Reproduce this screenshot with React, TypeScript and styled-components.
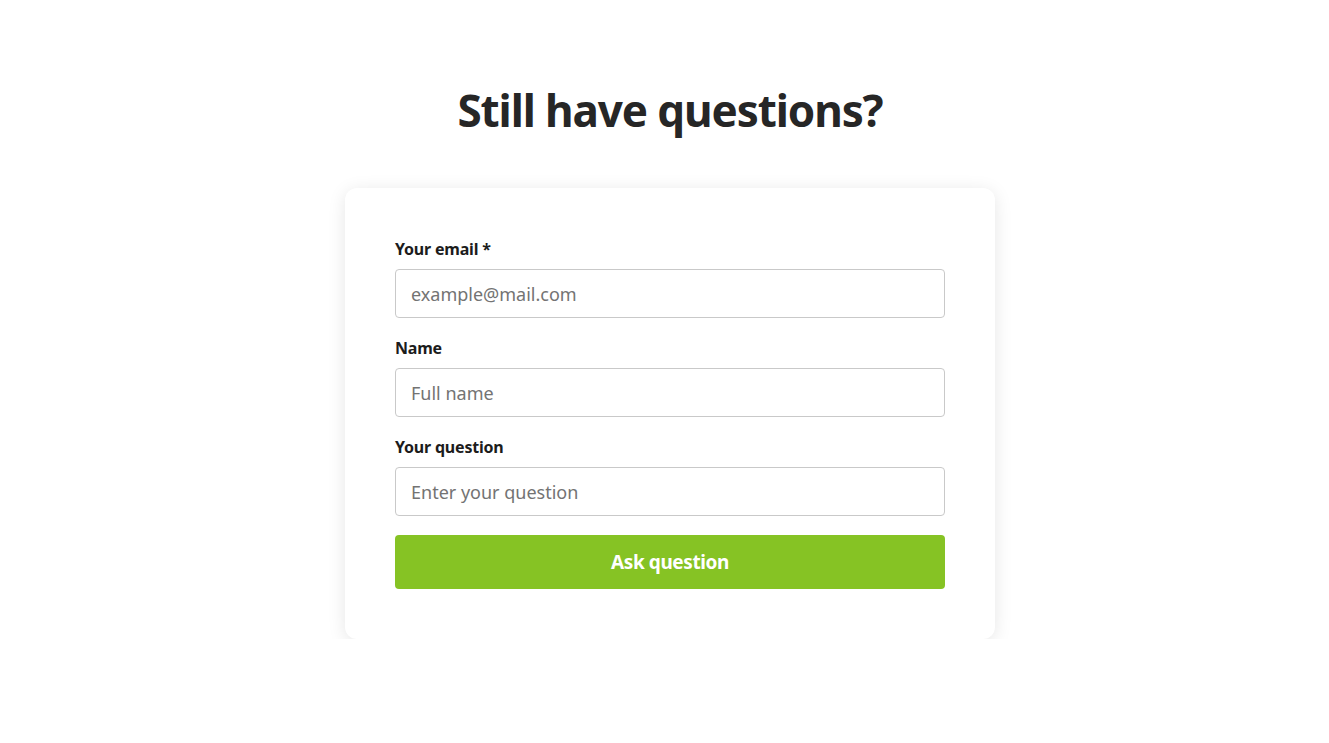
import React from 'react';
import styled, { createGlobalStyle } from 'styled-components';

const GlobalStyle = createGlobalStyle`
  * { box-sizing: border-box; }
  body {
    margin: 0;
    background: #ffffff;
    font-family: "Noto Sans", "Open Sans", Arial, sans-serif;
    color: #222222;
  }
`;

const Page = styled.main`
  display: flex;
  flex-direction: column;
  align-items: center;
  padding: 80px 0 0 11px;
`;

const Title = styled.h1`
  margin: 0 0 48px;
  font-size: 44px;
  line-height: 60px;
  font-weight: 700;
  letter-spacing: -1.1px;
  color: #262626;
`;

const Card = styled.form`
  width: 650px;
  padding: 50px;
  background: #ffffff;
  border-radius: 12px;
  box-shadow: 0 3px 18px rgba(0, 0, 0, 0.1);
  display: flex;
  flex-direction: column;
`;

const Field = styled.div`
  display: flex;
  flex-direction: column;
  margin-bottom: 19px;
`;

const Label = styled.label`
  font-size: 16px;
  line-height: 22px;
  font-weight: 700;
  color: #1c1c1c;
  margin-bottom: 9px;
  letter-spacing: -0.2px;
`;

const Input = styled.input`
  height: 49px;
  width: 100%;
  padding: 0 15px;
  border: 1px solid #c9c9c9;
  border-radius: 4px;
  font-family: inherit;
  font-size: 18px;
  color: #222222;
  outline: none;

  &::placeholder {
    color: #737373;
  }
`;

const Submit = styled.button`
  height: 54px;
  width: 100%;
  border: none;
  border-radius: 4px;
  background: #86c324;
  color: #ffffff;
  font-family: inherit;
  font-size: 19px;
  font-weight: 700;
  letter-spacing: -0.4px;
  cursor: pointer;
`;

const fields = [
  { id: 'email', label: 'Your email *', placeholder: 'example@mail.com', type: 'email' },
  { id: 'name', label: 'Name', placeholder: 'Full name', type: 'text' },
  { id: 'question', label: 'Your question', placeholder: 'Enter your question', type: 'text' },
];

const App: React.FC = () => {
  return (
    <Page>
      <GlobalStyle />
      <Title>Still have questions?</Title>
      <Card onSubmit={(e) => e.preventDefault()}>
        {fields.map((f) => (
          <Field key={f.id}>
            <Label htmlFor={f.id}>{f.label}</Label>
            <Input id={f.id} type={f.type} placeholder={f.placeholder} />
          </Field>
        ))}
        <Submit type="submit">Ask question</Submit>
      </Card>
    </Page>
  );
};

export default App;
